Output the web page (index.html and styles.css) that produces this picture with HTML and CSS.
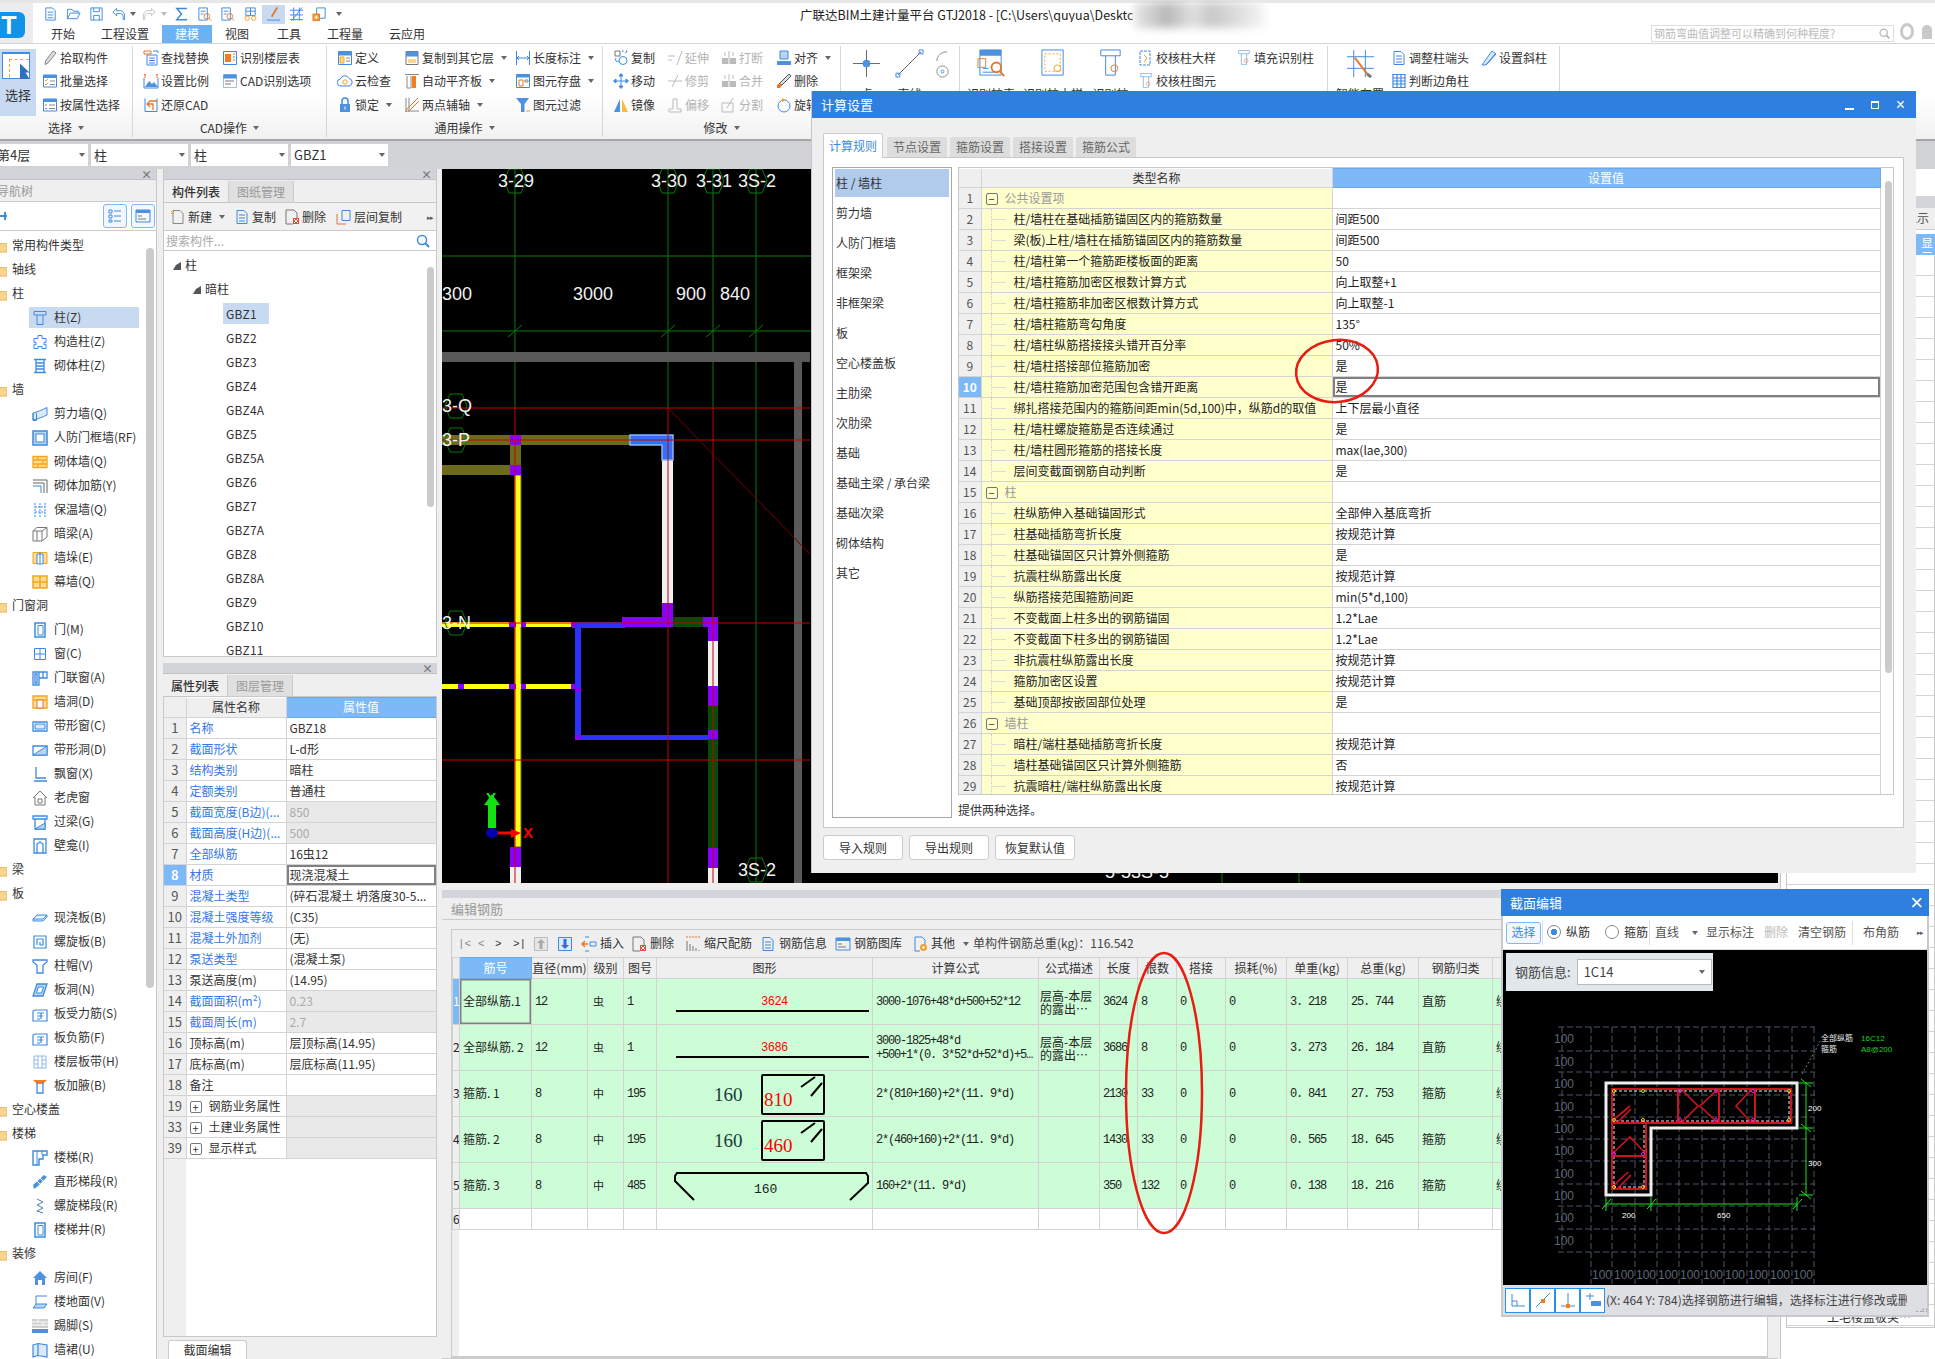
FILE: index.html
```html
<!DOCTYPE html>
<html lang="zh-CN">
<head>
<meta charset="utf-8">
<title>广联达BIM土建计量平台 GTJ2018</title>
<link rel="stylesheet" href="styles.css">
</head>
<body>
<svg class="sprite" aria-hidden="true">
<symbol id="doc" viewBox="0 0 16 16"><path d="M3 1.500h7l3 3v10H3zM5 6h6M5 9h6M5 12h6"/></symbol>
<symbol id="open" viewBox="0 0 16 16"><path d="M1.500 13V3h5l1.500 2h5v2M1.500 13l3-6h10.500l-3 6z"/></symbol>
<symbol id="save" viewBox="0 0 16 16"><path d="M2 1.500h12v13H2zM5 1.500v4h6v-4M5 14.500v-5h6v5"/></symbol>
<symbol id="undo" viewBox="0 0 16 16"><path d="M6 2L2 6l4 4V7.500h4a3 3 0 0 1 3 3V14h1.500v-4A5 5 0 0 0 10 4.500H6z"/></symbol>
<symbol id="redo" viewBox="0 0 16 16"><path stroke="#c4c4c4" d="M10 2l4 4-4 4V7.500H6a3 3 0 0 0-3 3V14H1.500v-4A5 5 0 0 1 6 4.500h4z"/></symbol>
<symbol id="sigma" viewBox="0 0 16 16"><path stroke-width="1.600" d="M13 3V2H3l5 6-5 6h10v-1"/></symbol>
<symbol id="find" viewBox="0 0 16 16"><path d="M2 1.500h9v13H2zM4 5h5M4 8h3"/><circle cx="10.500" cy="10.500" r="3" stroke="#e8762b"/><path stroke="#e8762b" d="M12.500 12.500l2.500 2.500"/></symbol>
<symbol id="glasses" viewBox="0 0 16 16"><path d="M3 1.500h10v8H3zM3 5h10M8 1.500v8"/><circle cx="4.500" cy="12.500" r="2.300" stroke="#f0a030"/><circle cx="11.500" cy="12.500" r="2.300" stroke="#f0a030"/></symbol>
<symbol id="pen" viewBox="0 0 16 16"><path stroke="#e8762b" stroke-width="2" d="M12 1L6 11"/><path d="M1 14.500h14"/></symbol>
<symbol id="gridb" viewBox="0 0 16 16"><path d="M1 4h14M1 9h14M1 14h14M5 1v14M11 1v14"/><path d="M3 15L14 1"/></symbol>
<symbol id="addd" viewBox="0 0 16 16"><path d="M5 1.500h9v11H5z"/><path fill="#f0a030" stroke="#e8762b" d="M1 8h7v7H1z"/><path stroke="#fff" d="M4.500 9.500v4M2.500 11.500h4"/></symbol>
<symbol id="col" viewBox="0 0 16 16"><path d="M2 1.500h12v3.500H2zM5 5v9.500h6V5"/></symbol>
<symbol id="ccol" viewBox="0 0 16 16"><path d="M6 1.500h4v3h4v4h-2v2h2v4h-4v-2H6v2H2v-4h2v-2H2v-4h4z"/></symbol>
<symbol id="mcol" viewBox="0 0 16 16"><path stroke-width="1.300" d="M2 1.500h12M2 14.500h12M4 1.500v13h8v-13M4 5h8M4 8h8M4 11h8"/></symbol>
<symbol id="shear" viewBox="0 0 16 16"><path fill="#dbe9f8" d="M1 7c4-1 9-3 14-5.500V9c-5 2.500-10 4-14 5z"/><path d="M1 7v7.500h3.500V7"/></symbol>
<symbol id="frame" viewBox="0 0 16 16"><path fill="#b9d3ef" stroke-width="1.500" d="M1 1h14v14H1z"/><path fill="#fff" d="M4 4h8v8H4z"/></symbol>
<symbol id="brick" viewBox="0 0 16 16"><path fill="#ffdc8f" stroke="#f2a61d" stroke-width="1.300" d="M1 2.500h14v11H1zM1 6h14M1 10h14M6 2.500V6M11 6v4M6 10v3.500"/></symbol>
<symbol id="rebw" viewBox="0 0 16 16"><path stroke="#666" d="M1 2h14v13M1 5h11v10"/><path d="M1 8h8v7"/></symbol>
<symbol id="insu" viewBox="0 0 16 16"><path stroke-dasharray="2 1" d="M3 1v14M8 1v14M13 1v14M3 5h10M3 10h10"/></symbol>
<symbol id="beam" viewBox="0 0 16 16"><path stroke="#777" d="M1 5h9v10H1zM1 5l4-3.500h10L10 5M10 15l5-4V1.500M5 5v10"/></symbol>
<symbol id="pier" viewBox="0 0 16 16"><path fill="#ffdc8f" stroke="#f2a61d" d="M1 2.500h14v11H1z"/><path fill="#fff" d="M5 4h6v10H5zM8 2v12"/></symbol>
<symbol id="curt" viewBox="0 0 16 16"><path fill="#ffdc8f" stroke="#f2a61d" stroke-width="1.500" d="M1 2h14v12H1zM1 8h14M8 2v12"/></symbol>
<symbol id="door" viewBox="0 0 16 16"><path stroke-width="1.500" d="M3 1h10v14H3z"/><path d="M6 3.500h5V13H6z"/></symbol>
<symbol id="win" viewBox="0 0 16 16"><path d="M2.500 2.500h11v11h-11zM8 2.500v11M2.500 8h11"/></symbol>
<symbol id="dwin" viewBox="0 0 16 16"><path stroke-width="1.300" d="M1 2h6v13H1zM3 4h2v9H3zM7 2h8v6H7zM11 2v6"/></symbol>
<symbol id="wh" viewBox="0 0 16 16"><path fill="#ffdc8f" stroke="#f2a61d" stroke-width="1.300" d="M1 2h14v12H1zM1 6h14"/><path fill="#fff" stroke="#e8762b" d="M5 6h6v8H5z"/></symbol>
<symbol id="stripw" viewBox="0 0 16 16"><path stroke-width="1.300" d="M1 4h14v9H1z"/><path fill="#dbe9f8" d="M3 6h10v5H3z"/></symbol>
<symbol id="striph" viewBox="0 0 16 16"><path stroke-width="1.300" d="M1 4h14v9H1z"/><path fill="#b9d3ef" d="M1 13L15 4v9z"/></symbol>
<symbol id="bay" viewBox="0 0 16 16"><path stroke-width="1.300" d="M4 1v11h10M2 15h13"/></symbol>
<symbol id="dorm" viewBox="0 0 16 16"><path stroke="#777" d="M1 8l7-7 7 7M3 7v8h10V7M6 9h4v4H6z"/></symbol>
<symbol id="lint" viewBox="0 0 16 16"><path stroke-width="1.300" d="M1 2h14v3H1zM3 5h10v10H3z"/><path fill="#b9d3ef" d="M3 15l10-6v6z"/></symbol>
<symbol id="nich" viewBox="0 0 16 16"><path stroke-width="1.300" d="M2 1h12v14H2zM5 15V6l3-2 3 2v9"/></symbol>
<symbol id="slab" viewBox="0 0 16 16"><path fill="#dbe9f8" d="M1 9l4-4h10v2l-4 4H1zM1 9h10l4-4"/></symbol>
<symbol id="spir" viewBox="0 0 16 16"><path stroke-width="1.200" d="M2 2h12v12H2zM5 11V5h6v6H8V8"/></symbol>
<symbol id="cap" viewBox="0 0 16 16"><path stroke-width="1.300" d="M1 2h14v2l-4 3v8H5V7L1 4z"/></symbol>
<symbol id="shol" viewBox="0 0 16 16"><path fill="#b9d3ef" stroke-width="1.300" d="M5 2h10l-4 12H1z"/><path fill="#fff" d="M6.500 5h5L9.500 11h-5z"/></symbol>
<symbol id="sbar" viewBox="0 0 16 16"><path stroke-width="1.200" d="M3 4h12v11H1V5zM5 7h7M9 7v6M5 10h6M5 13h3"/></symbol>
<symbol id="band" viewBox="0 0 16 16"><path stroke="#8ab8e8" d="M2 2h12v12H2zM6 2v12M10 2v12M2 6h4M10 6h4M2 10h4M10 10h4"/></symbol>
<symbol id="haun" viewBox="0 0 16 16"><path fill="#f57d20" stroke="none" d="M1 2h14l-4 4H5z"/><path stroke-width="1.300" d="M5 4v11h6V4"/></symbol>
<symbol id="stair" viewBox="0 0 16 16"><path stroke-width="1.400" d="M1 1h14v4h-4v4H7v6H1z"/><path d="M5 1v14M10 1v4"/></symbol>
<symbol id="flig" viewBox="0 0 16 16"><path fill="#4d91df" stroke="none" d="M1 11L12 1l3 2L5 13l-3 2z"/><path stroke="#fff" d="M5 7l3 3M8 4l3 3"/></symbol>
<symbol id="sps" viewBox="0 0 16 16"><path stroke="#4d7fc0" d="M5 1l6 3-6 3 6 3-6 3 6 2"/></symbol>
<symbol id="room" viewBox="0 0 16 16"><path fill="#4d91df" stroke="none" d="M8 1l7 7h-2v7h-3v-5H6v5H3V8H1z"/></symbol>
<symbol id="flr" viewBox="0 0 16 16"><path fill="#b9d3ef" d="M4 10h11l-3 4H1z"/><path d="M4 10V2h11"/></symbol>
<symbol id="skir" viewBox="0 0 16 16"><path fill="#cfcfcf" stroke="none" d="M0 1h16v9H0z"/><path stroke="#fff" d="M0 4h16M0 7h16M6 1v3M11 4v3"/><path fill="#4d91df" stroke="none" d="M0 11h16v4H0z"/></symbol>
<symbol id="dado" viewBox="0 0 16 16"><path fill="#dbe9f8" stroke-width="1.200" d="M1 3l5-1.500L15 3v12l-9-1.500L1 15zM6 1.500v12"/></symbol>
<symbol id="folder" viewBox="0 0 16 16"><path fill="#f8d690" stroke="#e9b45c" d="M0 4h6l2 2h8v9H0z"/></symbol>
<symbol id="pick" viewBox="0 0 16 16"><path fill="#ddd" stroke="#888" d="M11 1l3 2-8 10-3 1.500.5-3.500z"/></symbol>
<symbol id="batch" viewBox="0 0 16 16"><path fill="#fff" d="M1.500 2h13v12h-13z"/><path fill="#4d91df" stroke="none" d="M1.500 2h13v3h-13z"/><path stroke="#f0a030" d="M3 7l1 1 2-2M3 11l1 1 2-2"/><path stroke="#888" d="M8 8h5M8 11.500h5"/></symbol>
<symbol id="attr" viewBox="0 0 16 16"><path fill="#fff" d="M1.500 2h13v12h-13z"/><path fill="#4d91df" stroke="none" d="M1.500 2h13v3h-13z"/><path stroke="#888" d="M3 8h2M7 8h6M3 11.500h2M7 11.500h6"/></symbol>
<symbol id="repl" viewBox="0 0 16 16"><path d="M4 5h10v10H4zM6 8h6M6 10.500h6M6 13h6"/><path stroke="#e8762b" d="M1 1h7v3H1z"/><path d="M10 1h5v2"/></symbol>
<symbol id="scal" viewBox="0 0 16 16"><path d="M1 5v10h14V5"/><path fill="#4d91df" stroke="none" d="M2 14l4-6 3 3 2-2 4 5z"/><path stroke="#e8762b" d="M2 1v4M1 2l1-1 1 1M14 1v4M13 2l1-1 1 1"/></symbol>
<symbol id="rest" viewBox="0 0 16 16"><path d="M2 1.500v13h12v-13"/><path stroke="#e8762b" stroke-width="1.300" d="M14 4H7L4 7l3 3M4 7h6v6"/></symbol>
<symbol id="ftab" viewBox="0 0 16 16"><path d="M1.500 1.500h13v13h-13z"/><path fill="#f57d20" stroke="none" d="M3 4h6v8H3z"/><path stroke="#888" d="M11 4h2M11 7h2M11 10h2"/></symbol>
<symbol id="copt" viewBox="0 0 16 16"><path stroke="#9ac0ea" d="M1.500 1.500h13v13h-13z"/><path fill="#4d91df" stroke="none" d="M1.500 1.500h13v4h-13z"/><path stroke="#777" d="M3 8h9M3 11h6"/></symbol>
<symbol id="defi" viewBox="0 0 16 16"><path fill="#fff" d="M1.500 1.500h13v13h-13z"/><path fill="#4d91df" stroke="none" d="M1.500 1.500h13v4h-13z"/><path fill="#ffdc8f" stroke="#f2a61d" d="M3 7h4v6H3z"/><path stroke="#888" d="M9 8h4M9 11h4"/></symbol>
<symbol id="clou" viewBox="0 0 16 16"><path d="M4 13a3.500 3.500 0 0 1-.5-7A4.500 4.500 0 0 1 12 5.500 3.800 3.800 0 0 1 12 13z"/><circle cx="8" cy="9" r="2.200" stroke="#f0a030"/></symbol>
<symbol id="lock" viewBox="0 0 16 16"><path d="M5 7V4a3 3 0 0 1 6 0v3" stroke-width="1.500"/><path fill="#4d91df" stroke="none" d="M3 7h10v8H3z"/><path stroke="#fff" d="M8 9.500v3"/></symbol>
<symbol id="cpto" viewBox="0 0 16 16"><path stroke="#777" d="M2 1.500h12v13H2z"/><path fill="#4d91df" stroke="none" d="M2 1.500h12v5H2z"/><path fill="#f8d690" stroke="none" d="M4 9h8v4H4z"/></symbol>
<symbol id="flus" viewBox="0 0 16 16"><path stroke="#888" d="M1 1.500h14M3 3v12h4V3"/><path fill="#f57d20" stroke="none" d="M8 3h4v12H8z"/></symbol>
<symbol id="twop" viewBox="0 0 16 16"><path stroke="#888" d="M2 1v14M1 14h14M5 1v14"/><path stroke="#e8762b" d="M2 13L14 1M6 13L15 4"/></symbol>
<symbol id="dimn" viewBox="0 0 16 16"><path d="M1.500 1v14M14.500 1v14M2 8h12M4 6L2 8l2 2M12 6l2 2-2 2"/></symbol>
<symbol id="stor" viewBox="0 0 16 16"><path d="M1.500 1.500h13v13h-13z"/><path fill="#4d91df" stroke="none" d="M1.500 1.500h13v3h-13z"/><path stroke="#e8762b" d="M4 7h4v6H4z"/><path stroke="#888" d="M10 7h3v2h-3z"/></symbol>
<symbol id="filt" viewBox="0 0 16 16"><path fill="#4d91df" stroke="none" d="M1 1h13L9.500 7v8H6V7z"/><path stroke="#f0a030" d="M11 14h4"/></symbol>
<symbol id="copy" viewBox="0 0 16 16"><circle cx="10" cy="10.500" r="4"/><path stroke="#777" d="M2 1h5v5H2z"/><path d="M12 3a2 2 0 1 0-2-1M3 8a2 2 0 1 0 3 3"/></symbol>
<symbol id="move" viewBox="0 0 16 16"><path d="M8 1v14M1 8h14"/><path fill="#4d91df" d="M8 .5L6 3h4zM8 15.500L6 13h4zM.5 8L3 6v4zM15.500 8L13 6v4z"/></symbol>
<symbol id="mirr" viewBox="0 0 16 16"><path fill="#4d91df" stroke="none" d="M7 2v13H1z"/><path fill="#f8bd40" stroke="none" d="M9 2v13h6z"/></symbol>
<symbol id="extn" viewBox="0 0 16 16"><path stroke="#bbb" d="M1 6h7M1 10h4M15 1l-5 14"/></symbol>
<symbol id="trim" viewBox="0 0 16 16"><path stroke="#bbb" d="M1 8h14M11 2L5 14"/></symbol>
<symbol id="offs" viewBox="0 0 16 16"><path stroke="#bbb" d="M2 15h12v-3H10V2H6v10H2z"/></symbol>
<symbol id="brk" viewBox="0 0 16 16"><path fill="#bbb" stroke="none" d="M1 8h6v6H1zM9 8h6v6H9z"/><path stroke="#bbb" d="M4 2v4M12 2v4M8 1v13"/></symbol>
<symbol id="splt" viewBox="0 0 16 16"><path stroke="#bbb" d="M1 6h11v9H1zM12 1L6 11"/></symbol>
<symbol id="algn" viewBox="0 0 16 16"><path fill="#b9d3ef" d="M4 1h8v8H4z"/><path fill="#4d91df" stroke="none" d="M1 11h14v4H1z"/></symbol>
<symbol id="dele" viewBox="0 0 16 16"><path fill="#ddd" stroke="#555" d="M13 1l2 2-9 9-3-1z"/><path fill="#e8762b" stroke="none" d="M1 12l3-2 2 2-2 3H1z"/></symbol>
<symbol id="rotl" viewBox="0 0 16 16"><circle cx="8" cy="9" r="6"/><path fill="#f0a030" stroke="none" d="M6 1l4 2-4 2z"/></symbol>
<symbol id="pt" viewBox="0 0 30 30"><path stroke="#666" d="M15 1v28M1 15h28"/><circle cx="15" cy="15" r="4" fill="#4d91df" stroke="none"/></symbol>
<symbol id="ln" viewBox="0 0 30 30"><path stroke="#666" d="M3 27L27 3"/><path d="M1 25h4v4H1zM25 1h4v4h-4z"/></symbol>
<symbol id="arc" viewBox="0 0 16 30"><path stroke="#888" d="M2 12C2 6 7 2 13 2"/><circle cx="8" cy="23" r="6" stroke="#888"/><circle cx="8" cy="23" r="1.500" stroke="#4d91df"/></symbol>
<symbol id="idt" viewBox="0 0 30 30"><path fill="#fff" d="M3 1h22v26H3z"/><path fill="#4d91df" stroke="none" d="M3 1h22v6H3z"/><path stroke="#f57d20" d="M1 10h8v9H1z"/><path d="M6 20h6M6 24h12"/><circle cx="20" cy="19" r="5" stroke="#e8762b" stroke-width="2"/><path stroke="#e8762b" stroke-width="2" d="M24 23l4 5"/></symbol>
<symbol id="idc" viewBox="0 0 30 30"><path d="M3 1h22v26H3z"/><path stroke="#f0a030" stroke-dasharray="2 2" d="M6 5h16v18H6z"/><circle cx="19" cy="20" r="3.500" stroke="#f0a030"/></symbol>
<symbol id="idp" viewBox="0 0 30 30"><path d="M5 1h20v6H5zM10 7v20h10V7"/><circle cx="19" cy="20" r="3.500" stroke="#e8762b"/></symbol>
<symbol id="smrt" viewBox="0 0 30 30"><path stroke="#3d8ae0" d="M1 8h28M1 20h28M8 1v28M20 1v28"/><path stroke="#e8762b" stroke-width="2" d="M9 9l14 18"/><path stroke="#777" stroke-width="3" d="M22 26l4 3"/></symbol>
<symbol id="chk" viewBox="0 0 16 16"><path stroke-dasharray="3 1" d="M2 1h10v14H2z"/><path stroke="#f0a030" d="M6 5l3 3-3 4"/></symbol>
<symbol id="slant" viewBox="0 0 16 16"><path fill="#dbe9f8" d="M1 15L11 1l4 3-7 8-4 3z"/><path d="M5 15L14 4"/></symbol>
<symbol id="ptbl" viewBox="0 0 16 16"><path stroke-width="1.200" d="M2 1.500h12v13H2zM2 5h12M2 8h12M2 11h12M6 1.500v13M10 1.500v13"/></symbol>
<symbol id="list" viewBox="0 0 16 16"><path d="M2 2h3v3H2zM2 7h3v3H2zM2 12h3v2H2zM7 3h7M7 8h7M7 13h7"/></symbol>
<symbol id="ins" viewBox="0 0 16 16"><path stroke="#e8762b" stroke-width="1.500" d="M7 8H2M4 5L1 8l3 3"/><path d="M9 6h6v4H9zM4 1h4M4 15h4"/></symbol>
<symbol id="del" viewBox="0 0 16 16"><path stroke="#777" d="M2 1h8l3 3v7M2 1v14h7"/><path fill="#e64c3c" stroke="none" d="M9 9h6v6H9z"/><path stroke="#fff" d="M10 10l4 4M14 10l-4 4"/></symbol>
<symbol id="cut" viewBox="0 0 16 16"><path stroke="#777" d="M2 15V5M5 15V8M8 15V10M11 15v-3M14 15v-1"/><path stroke="#e8762b" stroke-dasharray="2 1" d="M1 1h14"/></symbol>
<symbol id="lib" viewBox="0 0 16 16"><path d="M1 2h14v12H1z"/><path fill="#4d91df" stroke="none" d="M1 2h14v3H1z"/><path stroke="#777" d="M3 8h4M3 11h8"/></symbol>
<symbol id="oth" viewBox="0 0 16 16"><path d="M3 1h7l3 3v7M3 1v14h5"/><circle cx="11.500" cy="11.500" r="3.500" fill="#f0a030" stroke="none"/><circle cx="11.500" cy="11.500" r="1.300" fill="#fff" stroke="none"/></symbol>
<symbol id="upd" viewBox="0 0 16 16"><path stroke="#bbb" fill="#e6e6e6" d="M1.500 1.500h13v13h-13z"/><path fill="#aaa" stroke="none" d="M8 3l4 4H9.500v6h-3V7H4z"/></symbol>
<symbol id="dnd" viewBox="0 0 16 16"><path fill="#dbe9f8" d="M1.500 1.500h13v13h-13z"/><path fill="#2f6fd0" stroke="none" d="M8 13l4-4H9.500V3h-3v6H4z"/></symbol>
<symbol id="newd" viewBox="0 0 16 16"><path stroke="#888" d="M3 1.500h7l3 3v10H3z"/><path stroke="#f0a030" d="M1 2l3 3M4 2L1 5"/></symbol>
<symbol id="flrc" viewBox="0 0 16 16"><path d="M6 1.500h8v10H6z"/><path stroke="#e8762b" d="M1 5v10h9"/></symbol>
<symbol id="srch" viewBox="0 0 16 16"><circle cx="7" cy="7" r="4.500" stroke-width="1.500"/><path stroke-width="2" d="M10 10l4 4"/></symbol>
</svg>

<div class="app">
  <header class="top">
    <div class="logo"><svg class="logo-svg" viewBox="0 0 33 40"><rect x="-6" y="9" width="31" height="26" rx="6" fill="#1293e8"/><text x="9" y="31" class="logo-t">T</text></svg></div>
    <div class="top-main">
      <div class="qat">
        <span class="q"><svg class="ic"><use href="#doc"/></svg></span>
        <span class="q"><svg class="ic"><use href="#open"/></svg></span>
        <span class="q"><svg class="ic"><use href="#save"/></svg></span>
        <span class="q q-w"><svg class="ic"><use href="#undo"/></svg><i class="dd"></i></span>
        <span class="q q-w"><svg class="ic"><use href="#redo"/></svg><i class="dd dd-l"></i></span>
        <span class="q"><svg class="ic"><use href="#sigma"/></svg></span>
        <span class="q"><svg class="ic"><use href="#find"/></svg></span>
        <span class="q"><svg class="ic"><use href="#find"/></svg></span>
        <span class="q"><svg class="ic"><use href="#glasses"/></svg></span>
        <span class="q q-on"><svg class="ic"><use href="#pen"/></svg></span>
        <span class="q"><svg class="ic"><use href="#gridb"/></svg></span>
        <span class="q"><svg class="ic"><use href="#addd"/></svg></span>
        <span class="q-more"><i class="dd"></i></span>
        <div class="title">广联达BIM土建计量平台 GTJ2018 - [C:\Users\quyua\Desktc</div>
        <div class="blur"></div>
      </div>
      <nav class="tabs">
        <span class="tab t1">开始</span><span class="tab t2">工程设置</span><span class="tab tab-on">建模</span><span class="tab t4">视图</span><span class="tab t5">工具</span><span class="tab t6">工程量</span><span class="tab t7">云应用</span>
        <div class="search"><span class="search-t">钢筋弯曲值调整可以精确到何种程度?</span><svg class="ic ic-g"><use href="#srch"/></svg></div>
        <span class="usr"></span><span class="bell"></span>
      </nav>
    </div>
  </header>

  <section class="ribbon">
    <div class="rg g-sel">
      <div class="rb">
        <div class="bigsel"><div class="bigsel-i"><i class="bigsel-d"></i><i class="bigsel-a"></i></div><span>选择</span></div>
        <div class="rgrid">
          <span class="ri"><svg class="ic"><use href="#pick"/></svg>拾取构件</span>
          <span class="ri"><svg class="ic"><use href="#batch"/></svg>批量选择</span>
          <span class="ri"><svg class="ic"><use href="#attr"/></svg>按属性选择</span>
        </div>
      </div>
      <div class="rl">选择<i class="dd"></i></div>
    </div>
    <div class="rg g-cad">
      <div class="rb"><div class="rgrid">
        <span class="ri"><svg class="ic"><use href="#repl"/></svg>查找替换</span>
        <span class="ri"><svg class="ic"><use href="#scal"/></svg>设置比例</span>
        <span class="ri"><svg class="ic"><use href="#rest"/></svg>还原CAD</span>
        <span class="ri"><svg class="ic"><use href="#ftab"/></svg>识别楼层表</span>
        <span class="ri"><svg class="ic"><use href="#copt"/></svg>CAD识别选项</span>
      </div></div>
      <div class="rl">CAD操作<i class="dd"></i></div>
    </div>
    <div class="rg g-gen">
      <div class="rb"><div class="rgrid">
        <span class="ri"><svg class="ic"><use href="#defi"/></svg>定义</span>
        <span class="ri"><svg class="ic"><use href="#clou"/></svg>云检查</span>
        <span class="ri"><svg class="ic"><use href="#lock"/></svg>锁定<i class="dd"></i></span>
        <span class="ri"><svg class="ic"><use href="#cpto"/></svg>复制到其它层<i class="dd"></i></span>
        <span class="ri"><svg class="ic"><use href="#flus"/></svg>自动平齐板<i class="dd"></i></span>
        <span class="ri"><svg class="ic"><use href="#twop"/></svg>两点辅轴<i class="dd"></i></span>
        <span class="ri"><svg class="ic"><use href="#dimn"/></svg>长度标注<i class="dd"></i></span>
        <span class="ri"><svg class="ic"><use href="#stor"/></svg>图元存盘<i class="dd"></i></span>
        <span class="ri"><svg class="ic"><use href="#filt"/></svg>图元过滤</span>
      </div></div>
      <div class="rl">通用操作<i class="dd"></i></div>
    </div>
    <div class="rg g-mod">
      <div class="rb"><div class="rgrid">
        <span class="ri"><svg class="ic"><use href="#copy"/></svg>复制</span>
        <span class="ri"><svg class="ic"><use href="#move"/></svg>移动</span>
        <span class="ri"><svg class="ic"><use href="#mirr"/></svg>镜像</span>
        <span class="ri ri-off"><svg class="ic"><use href="#extn"/></svg>延伸</span>
        <span class="ri ri-off"><svg class="ic"><use href="#trim"/></svg>修剪</span>
        <span class="ri ri-off"><svg class="ic"><use href="#offs"/></svg>偏移</span>
        <span class="ri ri-off"><svg class="ic"><use href="#brk"/></svg>打断</span>
        <span class="ri ri-off"><svg class="ic"><use href="#brk"/></svg>合并</span>
        <span class="ri ri-off"><svg class="ic"><use href="#splt"/></svg>分割</span>
        <span class="ri"><svg class="ic"><use href="#algn"/></svg>对齐<i class="dd"></i></span>
        <span class="ri"><svg class="ic"><use href="#dele"/></svg>删除</span>
        <span class="ri"><svg class="ic"><use href="#rotl"/></svg>旋转</span>
      </div></div>
      <div class="rl">修改<i class="dd"></i></div>
    </div>
    <div class="rg g-draw">
      <div class="rb">
        <div class="bb bb-pt"><svg class="ic30"><use href="#pt"/></svg><span>点</span></div>
        <div class="bb bb-ln"><svg class="ic30"><use href="#ln"/></svg><span>直线</span></div>
        <svg class="ic-arc"><use href="#arc"/></svg>
      </div>
    </div>
    <div class="rg g-rec">
      <div class="rb">
        <div class="bb bb-a"><svg class="ic30"><use href="#idt"/></svg><span>识别柱表</span></div>
        <div class="bb bb-b"><svg class="ic30"><use href="#idc"/></svg><span>识别柱大样</span></div>
        <div class="bb bb-c"><svg class="ic30"><use href="#idp"/></svg><span>识别柱</span></div>
        <div class="rgrid">
          <span class="ri"><svg class="ic"><use href="#chk"/></svg>校核柱大样</span>
          <span class="ri"><svg class="ic"><use href="#idp"/></svg>校核柱图元</span>
          <span class="ri"><svg class="ic"><use href="#idp"/></svg>填充识别柱</span>
        </div>
      </div>
    </div>
    <div class="rg g-smart">
      <div class="rb">
        <div class="bb bb-s"><svg class="ic30"><use href="#smrt"/></svg><span>智能布置</span></div>
        <div class="rgrid">
          <span class="ri"><svg class="ic"><use href="#doc"/></svg>调整柱端头</span>
          <span class="ri"><svg class="ic"><use href="#ptbl"/></svg>判断边角柱</span>
          <span class="ri"><svg class="ic"><use href="#slant"/></svg>设置斜柱</span>
        </div>
      </div>
    </div>
  </section>

  <section class="combos">
    <div class="cb cb-a"><span class="cb-cut">第4层</span><i class="dd"></i></div>
    <div class="cb cb-b"><span>柱</span><i class="dd"></i></div>
    <div class="cb cb-b"><span>柱</span><i class="dd"></i></div>
    <div class="cb cb-b"><span>GBZ1</span><i class="dd"></i></div>
  </section>

  <main class="work">
    <aside class="nav">
      <div class="pbar"><span class="px">×</span></div>
      <div class="nav-head"><span class="nav-cut">导航树</span></div>
      <div class="nav-tool"><svg class="pin" viewBox="0 0 10 10"><path d="M0 5h7M5 1v8"/></svg><span class="vbtn"><svg class="ic"><use href="#list"/></svg></span><span class="vbtn"><svg class="ic"><use href="#lib"/></svg></span></div>
      <div class="nav-body">
        <div class="tree">
          <div class="nr g"><svg class="fold"><use href="#folder"/></svg>常用构件类型</div>
          <div class="nr g"><svg class="fold"><use href="#folder"/></svg>轴线</div>
          <div class="nr g"><svg class="fold"><use href="#folder"/></svg>柱</div>
          <div class="nr i on"><svg class="ic"><use href="#col"/></svg>柱(Z)</div>
          <div class="nr i"><svg class="ic"><use href="#ccol"/></svg>构造柱(Z)</div>
          <div class="nr i"><svg class="ic"><use href="#mcol"/></svg>砌体柱(Z)</div>
          <div class="nr g"><svg class="fold"><use href="#folder"/></svg>墙</div>
          <div class="nr i"><svg class="ic"><use href="#shear"/></svg>剪力墙(Q)</div>
          <div class="nr i"><svg class="ic"><use href="#frame"/></svg>人防门框墙(RF)</div>
          <div class="nr i"><svg class="ic"><use href="#brick"/></svg>砌体墙(Q)</div>
          <div class="nr i"><svg class="ic"><use href="#rebw"/></svg>砌体加筋(Y)</div>
          <div class="nr i"><svg class="ic"><use href="#insu"/></svg>保温墙(Q)</div>
          <div class="nr i"><svg class="ic"><use href="#beam"/></svg>暗梁(A)</div>
          <div class="nr i"><svg class="ic"><use href="#pier"/></svg>墙垛(E)</div>
          <div class="nr i"><svg class="ic"><use href="#curt"/></svg>幕墙(Q)</div>
          <div class="nr g"><svg class="fold"><use href="#folder"/></svg>门窗洞</div>
          <div class="nr i"><svg class="ic"><use href="#door"/></svg>门(M)</div>
          <div class="nr i"><svg class="ic"><use href="#win"/></svg>窗(C)</div>
          <div class="nr i"><svg class="ic"><use href="#dwin"/></svg>门联窗(A)</div>
          <div class="nr i"><svg class="ic"><use href="#wh"/></svg>墙洞(D)</div>
          <div class="nr i"><svg class="ic"><use href="#stripw"/></svg>带形窗(C)</div>
          <div class="nr i"><svg class="ic"><use href="#striph"/></svg>带形洞(D)</div>
          <div class="nr i"><svg class="ic"><use href="#bay"/></svg>飘窗(X)</div>
          <div class="nr i"><svg class="ic"><use href="#dorm"/></svg>老虎窗</div>
          <div class="nr i"><svg class="ic"><use href="#lint"/></svg>过梁(G)</div>
          <div class="nr i"><svg class="ic"><use href="#nich"/></svg>壁龛(I)</div>
          <div class="nr g"><svg class="fold"><use href="#folder"/></svg>梁</div>
          <div class="nr g"><svg class="fold"><use href="#folder"/></svg>板</div>
          <div class="nr i"><svg class="ic"><use href="#slab"/></svg>现浇板(B)</div>
          <div class="nr i"><svg class="ic"><use href="#spir"/></svg>螺旋板(B)</div>
          <div class="nr i"><svg class="ic"><use href="#cap"/></svg>柱帽(V)</div>
          <div class="nr i"><svg class="ic"><use href="#shol"/></svg>板洞(N)</div>
          <div class="nr i"><svg class="ic"><use href="#sbar"/></svg>板受力筋(S)</div>
          <div class="nr i"><svg class="ic"><use href="#sbar"/></svg>板负筋(F)</div>
          <div class="nr i"><svg class="ic"><use href="#band"/></svg>楼层板带(H)</div>
          <div class="nr i"><svg class="ic"><use href="#haun"/></svg>板加腋(B)</div>
          <div class="nr g"><svg class="fold"><use href="#folder"/></svg>空心楼盖</div>
          <div class="nr g"><svg class="fold"><use href="#folder"/></svg>楼梯</div>
          <div class="nr i"><svg class="ic"><use href="#stair"/></svg>楼梯(R)</div>
          <div class="nr i"><svg class="ic"><use href="#flig"/></svg>直形梯段(R)</div>
          <div class="nr i"><svg class="ic"><use href="#sps"/></svg>螺旋梯段(R)</div>
          <div class="nr i"><svg class="ic"><use href="#door"/></svg>楼梯井(R)</div>
          <div class="nr g"><svg class="fold"><use href="#folder"/></svg>装修</div>
          <div class="nr i"><svg class="ic"><use href="#room"/></svg>房间(F)</div>
          <div class="nr i"><svg class="ic"><use href="#flr"/></svg>楼地面(V)</div>
          <div class="nr i"><svg class="ic"><use href="#skir"/></svg>踢脚(S)</div>
          <div class="nr i"><svg class="ic"><use href="#dado"/></svg>墙裙(U)</div>
        </div>
        <div class="vs vs-nav"><i></i></div>
      </div>
    </aside>

    <div class="mid">
      <section class="clist">
        <div class="pbar"><span class="px">×</span></div>
        <div class="ptabs"><span class="ptab ptab-on">构件列表</span><span class="ptab">图纸管理</span></div>
        <div class="ctool">
          <span class="ct ct-a"><svg class="ic"><use href="#newd"/></svg>新建<i class="dd"></i></span>
          <span class="ct ct-b"><svg class="ic"><use href="#doc"/></svg>复制</span>
          <span class="ct ct-c"><svg class="ic"><use href="#del"/></svg>删除</span>
          <span class="ct"><svg class="ic"><use href="#flrc"/></svg>层间复制</span>
          <span class="more">▸▸</span>
        </div>
        <div class="csearch"><span>搜索构件...</span><svg class="ic"><use href="#srch"/></svg></div>
        <div class="cbody">
          <div class="ctree">
            <div class="cr cr0"><i class="tw"></i>柱</div>
            <div class="cr cr1"><i class="tw"></i>暗柱</div>
            <div class="cr cr2 on"><span>GBZ1</span></div>
            <div class="cr cr2"><span>GBZ2</span></div>
            <div class="cr cr2"><span>GBZ3</span></div>
            <div class="cr cr2"><span>GBZ4</span></div>
            <div class="cr cr2"><span>GBZ4A</span></div>
            <div class="cr cr2"><span>GBZ5</span></div>
            <div class="cr cr2"><span>GBZ5A</span></div>
            <div class="cr cr2"><span>GBZ6</span></div>
            <div class="cr cr2"><span>GBZ7</span></div>
            <div class="cr cr2"><span>GBZ7A</span></div>
            <div class="cr cr2"><span>GBZ8</span></div>
            <div class="cr cr2"><span>GBZ8A</span></div>
            <div class="cr cr2"><span>GBZ9</span></div>
            <div class="cr cr2"><span>GBZ10</span></div>
            <div class="cr cr2"><span>GBZ11</span></div>
          </div>
          <div class="vs vs-c"><i></i></div>
        </div>
      </section>
      <section class="props">
        <div class="pbar"><span class="px">×</span></div>
        <div class="ptabs"><span class="ptab ptab-on">属性列表</span><span class="ptab">图层管理</span></div>
        <div class="pbody">
          <table class="ptable">
            <colgroup><col class="pc1"><col class="pc2"><col class="pc3"></colgroup>
            <tr class="ph"><th></th><th>属性名称</th><th class="hl">属性值</th></tr>
            <tr><td class="n">1</td><td class="lk">名称</td><td>GBZ18</td></tr>
            <tr><td class="n">2</td><td class="lk">截面形状</td><td>L-d形</td></tr>
            <tr><td class="n">3</td><td class="lk">结构类别</td><td>暗柱</td></tr>
            <tr><td class="n">4</td><td class="lk">定额类别</td><td>普通柱</td></tr>
            <tr><td class="n">5</td><td class="lk">截面宽度(B边)(...</td><td class="dis">850</td></tr>
            <tr><td class="n">6</td><td class="lk">截面高度(H边)(...</td><td class="dis">500</td></tr>
            <tr><td class="n">7</td><td class="lk">全部纵筋</td><td>16虫12</td></tr>
            <tr><td class="n nsel">8</td><td class="lk">材质</td><td class="csel">现浇混凝土</td></tr>
            <tr><td class="n">9</td><td class="lk">混凝土类型</td><td>(碎石混凝土 坍落度30-5...</td></tr>
            <tr><td class="n">10</td><td class="lk">混凝土强度等级</td><td>(C35)</td></tr>
            <tr><td class="n">11</td><td class="lk">混凝土外加剂</td><td>(无)</td></tr>
            <tr><td class="n">12</td><td class="lk">泵送类型</td><td>(混凝土泵)</td></tr>
            <tr><td class="n">13</td><td>泵送高度(m)</td><td>(14.95)</td></tr>
            <tr><td class="n">14</td><td class="lk">截面面积(m²)</td><td class="dis">0.23</td></tr>
            <tr><td class="n">15</td><td class="lk">截面周长(m)</td><td class="dis">2.7</td></tr>
            <tr><td class="n">16</td><td>顶标高(m)</td><td>层顶标高(14.95)</td></tr>
            <tr><td class="n">17</td><td>底标高(m)</td><td>层底标高(11.95)</td></tr>
            <tr><td class="n">18</td><td>备注</td><td></td></tr>
            <tr><td class="n">19</td><td><i class="pm">+</i>钢筋业务属性</td><td class="dis"></td></tr>
            <tr><td class="n">33</td><td><i class="pm">+</i>土建业务属性</td><td class="dis"></td></tr>
            <tr><td class="n">39</td><td><i class="pm">+</i>显示样式</td><td class="dis"></td></tr>
          </table>
        </div>
        <div class="stabs"><span class="stab">截面编辑</span></div>
      </section>
    </div>

    <div class="center">
      <svg class="canvas" viewBox="442 169 1336 714">
        <defs><polygon id="hex" points="-11,0 -6,-12 6,-12 11,0 6,12 -6,12" fill="none" stroke="#0a7a0a"/></defs>
        <rect x="442" y="169" width="1336" height="714" fill="#000"/>
        <path class="cg" d="M442 256H1778M442 331H1778M515 169V408M668 169V408M713 169V408M756 169V882M1222 860V883M1299 860V883"/>
        <path class="cg" d="M508 337L522 325M661 337L675 325M706 337L720 325M749 337L763 325"/>
        <path fill="#595959" d="M442 352H810V362H802V883H794V362H442z"/>
        <rect x="442" y="435" width="188" height="10" fill="#6b6b1b"/>
        <rect x="510" y="435" width="11" height="40" fill="#6b6b1b"/>
        <rect x="442" y="465" width="68" height="10" fill="#6b6b1b"/>
        <path fill="#ffff14" stroke="#6b6b1b" d="M514.500 475h6.500v372h-6.500z"/>
        <rect x="510" y="867" width="11" height="16" fill="#f0f0f0"/>
        <path fill="#ffff14" d="M442 622H572V627H442zM442 684H572V689H442z"/>
        <path fill="#2f2fff" d="M572 622H625V628H572zM575 625H581V740H575zM575 735H708V740H575z"/>
        <path fill="#064d06" d="M673 617H705V627H673zM708 706H718V848H708z"/>
        <path fill="#f0f0f0" d="M662 460H673V603H662zM708 641H718V686H708zM708 868H718V883H708z"/>
        <path fill="#8a00ff" d="M510 435H521V445H510zM510 465H521V475H510zM510 847H521V867H510zM662 603H673V627H662zM622 617H673V627H622zM703 617H718V627H703zM708 627H718V641H708zM708 686H718V706H708zM708 730H718V739H708zM708 848H718V868H708zM509 622H516V627H509zM521 622H526V627H521zM571 622H576V627H571zM458 684H464V689H458zM509 684H516V689H509zM521 684H526V689H521zM571 684H576V689H571zM575 688H581V692H575zM575 735H581V740H575z"/>
        <path fill="#2f72ff" stroke="#8fb4ea" stroke-width="1.500" d="M630 435H673V460H662V445H630z"/>
        <path class="cr1l" d="M442 408H810M442 440H810M442 623H810M442 760H810M515 408V883M668 408V883M713 408V883"/>
        <path class="cr1l cr1d" d="M668 408L810 554"/>
        <path fill="#14e014" d="M488 805H484L492 794L500 805H496V828H488z"/>
        <path stroke="#f00" stroke-width="3" d="M494 833H512"/>
        <path fill="#f00" d="M511 829L521 833L511 838z"/>
        <ellipse cx="492" cy="833" rx="6" ry="5" fill="#0000b4"/>
        <text class="axis ax-g" x="486" y="803">Y</text>
        <text class="axis ax-r" x="523" y="838">X</text>
        <use href="#hex" x="515" y="181"/><use href="#hex" x="668" y="181"/><use href="#hex" x="713" y="181"/><use href="#hex" x="756" y="181"/>
        <use href="#hex" x="456" y="406"/><use href="#hex" x="456" y="440"/><use href="#hex" x="456" y="623"/><use href="#hex" x="756" y="870"/>
        <text class="ct1" x="498" y="187">3-29</text>
        <text class="ct1" x="651" y="187">3-30</text>
        <text class="ct1" x="696" y="187">3-31</text>
        <text class="ct1" x="738" y="187">3S-2</text>
        <text class="ct1" x="442" y="300">300</text>
        <text class="ct1" x="573" y="300">3000</text>
        <text class="ct1" x="676" y="300">900</text>
        <text class="ct1" x="720" y="300">840</text>
        <text class="ct1" x="442" y="412">3-Q</text>
        <text class="ct1" x="442" y="446">3-P</text>
        <text class="ct1" x="442" y="629">3-N</text>
        <text class="ct1" x="738" y="876">3S-2</text>
        <text class="ct1" x="1105" y="878">5-53S-5</text>
      </svg>
      <div class="gapbar"></div>
      <section class="rebar">
        <div class="rebar-t">编辑钢筋</div>
        <div class="rebar-box">
          <div class="rtool">
            <span class="nv nv1">|&lt;</span><span class="nv nv2">&lt;</span><span class="nv nv3">&gt;</span><span class="nv nv4">&gt;|</span>
            <svg class="ic rt-up"><use href="#upd"/></svg>
            <svg class="ic rt-dn"><use href="#dnd"/></svg>
            <span class="rt rt1"><svg class="ic"><use href="#ins"/></svg>插入</span>
            <span class="rt rt2"><svg class="ic"><use href="#del"/></svg>删除</span>
            <span class="rt rt3"><svg class="ic"><use href="#cut"/></svg>缩尺配筋</span>
            <span class="rt rt4"><svg class="ic"><use href="#doc"/></svg>钢筋信息</span>
            <span class="rt rt5"><svg class="ic"><use href="#lib"/></svg>钢筋图库</span>
            <span class="rt rt6"><svg class="ic"><use href="#oth"/></svg>其他<i class="dd"></i></span>
            <span class="rt-tot">单构件钢筋总重(kg)：116.542</span>
          </div>
          <table class="rtable">
            <colgroup><col class="c0"><col class="c1"><col class="c2"><col class="c3"><col class="c4"><col class="c5"><col class="c6"><col class="c7"><col class="c8"><col class="c9"><col class="c10"><col class="c11"><col class="c12"><col class="c13"><col class="c14"><col class="c15"></colgroup>
            <tr class="rh"><th></th><th class="hl">筋号</th><th>直径(mm)</th><th>级别</th><th>图号</th><th>图形</th><th>计算公式</th><th>公式描述</th><th>长度</th><th>根数</th><th>搭接</th><th>损耗(%)</th><th>单重(kg)</th><th>总重(kg)</th><th>钢筋归类</th><th>搭接形式</th></tr>
            <tr class="rr">
              <td class="rn rn-sel">1</td><td class="rname rsel">全部纵筋.1</td><td class="m">12</td><td class="gr">虫</td><td class="m">1</td>
              <td class="shape"><svg class="sh" viewBox="0 0 216 45"><text class="s-r" x="104" y="26">3624</text><path class="s-l" d="M19 32H212"/></svg></td>
              <td class="m f">3000-1076+48*d+500+52*12</td><td class="ds">层高-本层<br>的露出…</td><td class="m">3624</td><td class="m">8</td><td class="m">0</td><td class="m">0</td><td class="m">3. 218</td><td class="m">25. 744</td><td>直筋</td><td>绑扎</td>
            </tr>
            <tr class="rr">
              <td class="rn">2</td><td class="rname">全部纵筋. 2</td><td class="m">12</td><td class="gr">虫</td><td class="m">1</td>
              <td class="shape"><svg class="sh" viewBox="0 0 216 45"><text class="s-r" x="104" y="26">3686</text><path class="s-l" d="M19 32H212"/></svg></td>
              <td class="m f">3000-1825+48*d<br>+500+1*(0. 3*52*d+52*d)+5…</td><td class="ds">层高-本层<br>的露出…</td><td class="m">3686</td><td class="m">8</td><td class="m">0</td><td class="m">0</td><td class="m">3. 273</td><td class="m">26. 184</td><td>直筋</td><td>绑扎</td>
            </tr>
            <tr class="rr">
              <td class="rn">3</td><td class="rname">箍筋. 1</td><td class="m">8</td><td class="gr">中</td><td class="m">195</td>
              <td class="shape"><svg class="sh" viewBox="0 0 216 45"><text class="s-b" x="57" y="30">160</text><rect class="s-l" x="105" y="4" width="62" height="39" rx="1"/><text class="s-br" x="107" y="35">810</text><path class="s-l" d="M144 16L158 6M154 25L165 12"/></svg></td>
              <td class="m f">2*(810+160)+2*(11. 9*d)</td><td></td><td class="m">2130</td><td class="m">33</td><td class="m">0</td><td class="m">0</td><td class="m">0. 841</td><td class="m">27. 753</td><td>箍筋</td><td>绑扎</td>
            </tr>
            <tr class="rr">
              <td class="rn">4</td><td class="rname">箍筋. 2</td><td class="m">8</td><td class="gr">中</td><td class="m">195</td>
              <td class="shape"><svg class="sh" viewBox="0 0 216 45"><text class="s-b" x="57" y="30">160</text><rect class="s-l" x="105" y="4" width="62" height="39" rx="1"/><text class="s-br" x="107" y="35">460</text><path class="s-l" d="M144 16L158 6M154 25L165 12"/></svg></td>
              <td class="m f">2*(460+160)+2*(11. 9*d)</td><td></td><td class="m">1430</td><td class="m">33</td><td class="m">0</td><td class="m">0</td><td class="m">0. 565</td><td class="m">18. 645</td><td>箍筋</td><td>绑扎</td>
            </tr>
            <tr class="rr">
              <td class="rn">5</td><td class="rname">箍筋. 3</td><td class="m">8</td><td class="gr">中</td><td class="m">485</td>
              <td class="shape"><svg class="sh" viewBox="0 0 216 45"><path class="s-l" d="M37 37L18 18V13L20 10H209L211 13V20L193 37"/><text class="s-m" x="97" y="30">160</text></svg></td>
              <td class="m f">160+2*(11. 9*d)</td><td></td><td class="m">350</td><td class="m">132</td><td class="m">0</td><td class="m">0</td><td class="m">0. 138</td><td class="m">18. 216</td><td>箍筋</td><td>绑扎</td>
            </tr>
            <tr class="rempty"><td class="rn">6</td><td></td><td></td><td></td><td></td><td></td><td></td><td></td><td></td><td></td><td></td><td></td><td></td><td></td><td></td><td></td></tr>
          </table>
        </div>
      </section>
    </div>

    <aside class="rp">
      <div class="rp-t"></div>
      <div class="rp-tab"><span>显示</span></div>
      <div class="rp-h"><span>显示</span></div>
      <div class="rp-rows"><span class="rp-txt">工毛楼盖板突…</span></div>
    </aside>
  </main>
</div>

<section class="win win-calc">
  <header class="win-t"><span>计算设置</span><span class="wb"><i class="wb-min"></i><i class="wb-max"></i><i class="wb-x">×</i></span></header>
  <div class="win-b">
    <div class="dtabs"><span class="dtab dtab-on">计算规则</span><span class="dtab">节点设置</span><span class="dtab">箍筋设置</span><span class="dtab">搭接设置</span><span class="dtab">箍筋公式</span></div>
    <div class="dpanel">
      <ul class="dlist">
        <li class="on">柱 / 墙柱</li><li>剪力墙</li><li>人防门框墙</li><li>框架梁</li><li>非框架梁</li><li>板</li><li>空心楼盖板</li><li>主肋梁</li><li>次肋梁</li><li>基础</li><li>基础主梁 / 承台梁</li><li>基础次梁</li><li>砌体结构</li><li>其它</li>
      </ul>
      <div class="dright">
        <div class="dwrap">
          <table class="stable">
            <colgroup><col class="sc1"><col class="sc2"><col class="sc3"></colgroup>
            <tr class="sh-r"><th></th><th>类型名称</th><th class="hl">设置值</th></tr>
            <tr><td class="n">1</td><td class="y g0"><i class="pm">−</i>公共设置项</td><td></td></tr>
            <tr><td class="n">2</td><td class="y l">柱/墙柱在基础插筋锚固区内的箍筋数量</td><td>间距500</td></tr>
            <tr><td class="n">3</td><td class="y l">梁(板)上柱/墙柱在插筋锚固区内的箍筋数量</td><td>间距500</td></tr>
            <tr><td class="n">4</td><td class="y l">柱/墙柱第一个箍筋距楼板面的距离</td><td>50</td></tr>
            <tr><td class="n">5</td><td class="y l">柱/墙柱箍筋加密区根数计算方式</td><td>向上取整+1</td></tr>
            <tr><td class="n">6</td><td class="y l">柱/墙柱箍筋非加密区根数计算方式</td><td>向上取整-1</td></tr>
            <tr><td class="n">7</td><td class="y l">柱/墙柱箍筋弯勾角度</td><td>135°</td></tr>
            <tr><td class="n">8</td><td class="y l">柱/墙柱纵筋搭接接头错开百分率</td><td>50%</td></tr>
            <tr><td class="n">9</td><td class="y l">柱/墙柱搭接部位箍筋加密</td><td>是</td></tr>
            <tr><td class="n nsel">10</td><td class="y l">柱/墙柱箍筋加密范围包含错开距离</td><td class="csel">是</td></tr>
            <tr><td class="n">11</td><td class="y l">绑扎搭接范围内的箍筋间距min(5d,100)中，纵筋d的取值</td><td>上下层最小直径</td></tr>
            <tr><td class="n">12</td><td class="y l">柱/墙柱螺旋箍筋是否连续通过</td><td>是</td></tr>
            <tr><td class="n">13</td><td class="y l">柱/墙柱圆形箍筋的搭接长度</td><td>max(lae,300)</td></tr>
            <tr><td class="n">14</td><td class="y l">层间变截面钢筋自动判断</td><td>是</td></tr>
            <tr><td class="n">15</td><td class="y g0"><i class="pm">−</i>柱</td><td></td></tr>
            <tr><td class="n">16</td><td class="y l">柱纵筋伸入基础锚固形式</td><td>全部伸入基底弯折</td></tr>
            <tr><td class="n">17</td><td class="y l">柱基础插筋弯折长度</td><td>按规范计算</td></tr>
            <tr><td class="n">18</td><td class="y l">柱基础锚固区只计算外侧箍筋</td><td>是</td></tr>
            <tr><td class="n">19</td><td class="y l">抗震柱纵筋露出长度</td><td>按规范计算</td></tr>
            <tr><td class="n">20</td><td class="y l">纵筋搭接范围箍筋间距</td><td>min(5*d,100)</td></tr>
            <tr><td class="n">21</td><td class="y l">不变截面上柱多出的钢筋锚固</td><td>1.2*Lae</td></tr>
            <tr><td class="n">22</td><td class="y l">不变截面下柱多出的钢筋锚固</td><td>1.2*Lae</td></tr>
            <tr><td class="n">23</td><td class="y l">非抗震柱纵筋露出长度</td><td>按规范计算</td></tr>
            <tr><td class="n">24</td><td class="y l">箍筋加密区设置</td><td>按规范计算</td></tr>
            <tr><td class="n">25</td><td class="y l">基础顶部按嵌固部位处理</td><td>是</td></tr>
            <tr><td class="n">26</td><td class="y g0"><i class="pm">−</i>墙柱</td><td></td></tr>
            <tr><td class="n">27</td><td class="y l">暗柱/端柱基础插筋弯折长度</td><td>按规范计算</td></tr>
            <tr><td class="n">28</td><td class="y l">墙柱基础锚固区只计算外侧箍筋</td><td>否</td></tr>
            <tr><td class="n">29</td><td class="y l">抗震暗柱/端柱纵筋露出长度</td><td>按规范计算</td></tr>
          </table>
          <div class="vs vs-s"><i></i></div>
        </div>
        <p class="dnote">提供两种选择。</p>
      </div>
    </div>
    <div class="dbtns"><button class="dbtn">导入规则</button><button class="dbtn">导出规则</button><button class="dbtn">恢复默认值</button></div>
  </div>
</section>

<section class="win win-sec">
  <header class="win-t"><span>截面编辑</span><i class="wb-x2">×</i></header>
  <div class="sec-tool">
    <span class="sbtn">选择</span><i class="ssep"></i>
    <span class="srad srad-on"><i></i>纵筋</span>
    <span class="srad srad-2"><i></i>箍筋</span><i class="ssep"></i>
    <span class="stl st-a">直线<i class="dd"></i></span><span class="stl">显示标注</span><span class="stl st-off">删除</span><span class="stl">清空钢筋</span><i class="ssep"></i><span class="stl st-e">布角筋</span><span class="more">▸▸</span>
  </div>
  <div class="sec-view">
    <div class="sec-info"><span>钢筋信息:</span><div class="sec-sel">1C14<i class="dd"></i></div></div>
    <svg class="sec-svg" viewBox="1503 951 424 334">
      <path class="gd" d="M1558 1028H1815M1558 1052H1815M1558 1073H1815M1558 1096H1815M1558 1118H1815M1558 1140H1815M1558 1162H1815M1558 1185H1815M1558 1207H1815M1558 1230H1815M1558 1253H1815M1591 1028V1285M1612 1028V1285M1635 1028V1285M1657 1028V1285M1679 1028V1285M1702 1028V1285M1724 1028V1285M1747 1028V1285M1769 1028V1285M1792 1028V1285M1814 1028V1285M1562 1028V1253"/>
      <g class="gl">
        <text x="1554" y="1044">100</text><text x="1554" y="1067">100</text><text x="1554" y="1089">100</text><text x="1554" y="1112">100</text><text x="1554" y="1134">100</text><text x="1554" y="1156">100</text><text x="1554" y="1179">100</text><text x="1554" y="1201">100</text><text x="1554" y="1223">100</text><text x="1554" y="1246">100</text>
        <text x="1592" y="1280">100</text><text x="1614" y="1280">100</text><text x="1636" y="1280">100</text><text x="1658" y="1280">100</text><text x="1680" y="1280">100</text><text x="1703" y="1280">100</text><text x="1725" y="1280">100</text><text x="1748" y="1280">100</text><text x="1770" y="1280">100</text><text x="1793" y="1280">100</text>
      </g>
      <path class="wl" d="M1606 1084H1797V1129H1651V1196H1606z"/>
      <path class="wd" d="M1614 1092H1789V1122H1614zM1614 1122V1188H1644V1122"/>
      <path class="rd" d="M1612 1090H1791V1124H1612zM1612 1124V1190H1646V1124M1678 1090V1124M1719 1090V1124M1755 1090V1124M1612 1157H1646"/>
      <path class="rd2" d="M1682 1091L1698 1107L1682 1123M1717 1091L1700 1107L1717 1123M1751 1091L1736 1107L1751 1123M1612 1122L1630 1107M1617 1124L1631 1110M1612 1188L1628 1173M1617 1190L1631 1176M1612 1155L1630 1138L1646 1155"/>
      <path class="grn" d="M1806 1084V1196M1799 1084H1813M1799 1129H1813M1799 1196H1813M1606 1205H1797M1606 1198V1212M1651 1198V1212M1797 1198V1212M1801 1080L1811 1088M1801 1125L1811 1133M1801 1192L1811 1200M1602 1210L1611 1200M1647 1210L1656 1200M1793 1210L1802 1200"/>
      <path class="lead" d="M1802 1075L1815 1052L1820 1042"/>
      <g class="dots"><circle cx="1614" cy="1092" r="1.500"/><circle cx="1643" cy="1092" r="1.500"/><circle cx="1789" cy="1092" r="1.500"/><circle cx="1789" cy="1121" r="1.500"/><circle cx="1614" cy="1121" r="1.500"/><circle cx="1643" cy="1121" r="1.500"/><circle cx="1614" cy="1188" r="1.500"/><circle cx="1643" cy="1188" r="1.500"/></g>
      <g class="dots dots-m"><circle cx="1680" cy="1092" r="1.500"/><circle cx="1716" cy="1092" r="1.500"/><circle cx="1753" cy="1092" r="1.500"/><circle cx="1680" cy="1121" r="1.500"/><circle cx="1716" cy="1121" r="1.500"/><circle cx="1753" cy="1121" r="1.500"/><circle cx="1614" cy="1155" r="1.500"/><circle cx="1643" cy="1155" r="1.500"/></g>
      <text class="dimt" x="1808" y="1112">200</text><text class="dimt" x="1808" y="1167">300</text><text class="dimt" x="1622" y="1219">200</text><text class="dimt" x="1717" y="1219">650</text>
      <text class="lgw" x="1821" y="1042">全部纵筋</text><text class="lgg" x="1861" y="1042">16C12</text>
      <text class="lgw" x="1821" y="1053">箍筋</text><text class="lgg" x="1861" y="1053">A8@200</text>
    </svg>
  </div>
  <footer class="sec-foot">
    <span class="fb"><svg class="ic"><path d="M2 2v12h13M2 9h5v5"/></svg></span><span class="fb"><svg class="ic"><path d="M1 15L15 1"/><path fill="#f57d20" stroke="none" d="M6 7h4v4H6z"/></svg></span><span class="fb"><svg class="ic"><path d="M8 1v13M1 14h14"/><path fill="#f57d20" stroke="none" d="M6 12h4v4H6z"/></svg></span><span class="fb"><svg class="ic"><path d="M1 4h8M5 1v7"/><path fill="#4d91df" stroke="none" d="M6 9h10v5H6z"/></svg></span>
    <span class="sec-st">(X: 464 Y: 784)选择钢筋进行编辑，选择标注进行修改或删除</span><span class="grip">⠠⠴⠶</span>
  </footer>
</section>

<svg class="annot" viewBox="0 0 1935 1359" aria-hidden="true">
  <ellipse cx="1337" cy="371" rx="41" ry="31" transform="rotate(-6 1337 371)"/>
  <ellipse cx="1164" cy="1093" rx="38" ry="140"/>
</svg>
</body>
</html>
```
FILE: styles.css
```css
*{box-sizing:border-box}
html{height:1359px;overflow:hidden}
html,body{margin:0;padding:0}
body{width:1935px;height:1359px;position:relative;overflow:hidden;background:#efefef;font:12px/1.2 "Noto Sans CJK SC","Noto Sans",sans-serif;color:#333}
i{font-style:normal}
.sprite{position:absolute;width:0;height:0;overflow:hidden}
.ic{width:16px;height:16px;flex:none;fill:none;stroke:#3d8ae0;stroke-width:1;display:block}
.ic30{width:29px;height:29px;display:block;fill:none;stroke:#3d8ae0}
.ic-g{stroke:#b5b5b5}
.dd{display:inline-block;width:0;height:0;border:3px solid transparent;border-top:4px solid #666;border-bottom:0;margin-left:6px;flex:none}
.dd-l{border-top-color:#bbb}
.app{width:1935px;height:1359px;display:flex;flex-direction:column}

/* title bar */
.top{height:43px;display:flex;background:#fff;border-top:3px solid #e6e6e6;flex:none}
.logo{width:33px;background:#ececee;flex:none}
.logo-svg{width:33px;height:40px;display:block}
.logo-t{font:bold 25px "Liberation Sans",sans-serif;fill:#fff;text-anchor:middle}
.top-main{flex:1;display:flex;flex-direction:column;min-width:0}
.qat{height:22px;display:flex;align-items:center;padding-left:6px;position:relative}
.q{width:23px;height:19px;display:flex;align-items:center;justify-content:center;flex:none}
.q .ic{width:15px;height:16px}
.q-w{width:31px;justify-content:flex-start;padding-left:3px}
.q-w .dd{margin-left:4px}
.q-on{background:#c8daf1}
.q-more{width:16px;display:flex;justify-content:center}
.q-more .dd{margin:0}
.title{margin-left:453px;font-size:12.500px;color:#222;white-space:nowrap;width:334px;overflow:hidden}
.blur{width:130px;height:26px;margin-top:2px;background:linear-gradient(90deg,#e8e8e8,#b8b8b8 25%,#e0e0e0 45%,#c8c8c8 60%,#f4f4f4);filter:blur(4px)}
.tabs{height:18px;display:flex;align-items:stretch;position:relative}
.tab{display:flex;align-items:center;font-size:12px;color:#333;flex:none}
.t1{margin-left:18px}
.t2{margin-left:26px}
.tab-on{margin-left:13px;width:50px;justify-content:center;background:#6cb1f2;color:#fff}
.t4{margin-left:13px}
.t5{margin-left:28px}
.t6{margin-left:26px}
.t7{margin-left:26px}
.search{width:243px;height:17px;margin-left:1226px;border:1px solid #ddd;display:flex;align-items:center;justify-content:space-between;padding:0 2px;color:#bbb;font-size:11px;flex:none}
.search .ic{width:13px;height:13px}
.usr{width:14px;height:17px;margin:-2px 0 0 6px;border-radius:50%;border:3px solid #c9c9c9;flex:none}
.bell{width:10px;height:14px;margin-left:8px;background:#c9c9c9;border-radius:5px 5px 0 0;flex:none}

/* ribbon */
.ribbon{height:98px;flex:none;display:flex;background:linear-gradient(#fff 55%,#f1f1f1);border-top:1px solid #d5d5d5;border-bottom:2px solid #a6a6a6}
.rg{display:flex;flex-direction:column;border-right:1px solid #d6d6d6;margin:2px 0;flex:none}
.rb{height:75px;display:flex;align-items:flex-start}
.rl{height:18px;display:flex;align-items:center;justify-content:center}
.rgrid{display:grid;grid-auto-flow:column;grid-template-rows:repeat(3,23.5px)}
.ri{display:flex;align-items:center;gap:2px;white-space:nowrap;color:#333}
.ri .dd{margin-left:5px}
.ri-off{color:#b4b4b4}
.g-sel{width:133px}
.bigsel{width:36px;height:67px;margin:3px 6px 0 0;background:#c8daf1;display:flex;flex-direction:column;align-items:center;justify-content:space-between;padding-bottom:13px;flex:none}
.bigsel-i{width:28px;height:27px;margin-top:3px;border:1px solid #3d8ae0;border-top:2px solid #3d8ae0;background:#fff;position:relative;margin-left:-5px}
.bigsel-d{position:absolute;left:6px;top:5px;width:20px;height:18px;border:1px dashed #f0a030;border-right:0;border-bottom:0}
.bigsel-a{position:absolute;right:-1px;bottom:-1px;width:10px;height:16px;background:#2e6fc0;clip-path:polygon(0 0,100% 60%,60% 60%,100% 100%,0 100%)}
.bigsel span{font-size:13px}
.g-cad{width:194px}
.g-cad .rb{padding-left:10px}
.g-cad .rgrid{grid-template-columns:79px auto}
.g-gen{width:276px}
.g-gen .rb{padding-left:10px}
.g-gen .rgrid{grid-template-columns:67px 111px auto}
.g-mod{width:238px}
.g-mod .rb{padding-left:10px}
.g-mod .rgrid{grid-template-columns:54px 54px 55px auto}
.g-draw{width:119px}
.bb{display:flex;flex-direction:column;align-items:center;white-space:nowrap;flex:none;gap:9px;padding-top:3px}
.bb-pt{margin-left:11px;width:29px}
.bb-ln{margin-left:14px;width:29px}
.ic-arc{width:15px;height:30px;margin:3px 0 0 11px;fill:none;stroke:#3d8ae0;flex:none}
.g-rec{width:368px}
.bb-a{width:48px;margin-left:7px}
.bb-b{width:60px;margin-left:8px}
.bb-c{width:33px;margin-left:11px}
.g-rec .rgrid{margin-left:11px;grid-template-columns:98px auto;grid-template-rows:repeat(2,23.5px)}
.g-smart{width:232px}
.bb-s{width:48px;margin-left:8px}
.g-smart .rgrid{margin-left:7px;grid-template-columns:90px auto;grid-template-rows:repeat(2,23.5px)}

/* combos */
.combos{height:28px;flex:none;background:#d0d2d6;display:flex;gap:3px;padding-top:3px}
.cb{height:22px;background:#fff;display:flex;align-items:center;justify-content:space-between;padding:0 3px;font-size:13px;overflow:hidden;flex:none}
.cb-a{width:88px}
.cb-b{width:97px}
.cb-cut{margin-left:-6px}

/* work */
.work{flex:1;display:flex;min-height:0}
.nav{width:157px;flex:none;display:flex;flex-direction:column;background:#fff;border-right:1px solid #c8c8c8;margin-right:6px}
.pbar{height:11px;background:#d3d4d9;display:flex;justify-content:flex-end;align-items:center;padding-right:4px;flex:none;border-bottom:1px solid #c2c2c2}
.px{font-size:11px;line-height:11px;color:#777;font-weight:bold}
.nav-head{height:22px;background:#efefef;display:flex;align-items:center;color:#999;border-bottom:1px solid #ccc;overflow:hidden;flex:none;padding-top:2px}
.nav-cut{margin-left:-3px}
.nav-tool{height:29px;display:flex;align-items:center;gap:4px;background:#fff;border-bottom:1px solid #ccc;flex:none;padding-right:1px;justify-content:flex-end;position:relative}
.pin{width:10px;height:10px;fill:none;stroke:#3d8ae0;stroke-width:2;margin-right:auto}
.vbtn{width:24px;height:24px;border:1px solid #7db9f7;border-radius:3px;display:flex;align-items:center;justify-content:center;background:#f3f8fe}
.nav-body{flex:1;display:flex;min-height:0;overflow:hidden}
.tree{width:146px;flex:none;padding-top:4px;overflow:hidden}
.nr{height:21px;margin-bottom:3px;display:flex;align-items:center;white-space:nowrap;color:#333}
.nr.g{padding-left:0}
.fold{width:15px;height:15px;margin-left:-8px;margin-right:5px;flex:none}
.nr.i{margin-left:29px;padding-left:3px;width:110px;gap:6px}
.nr.on{background:#c8daf1}
.vs{flex:none;position:relative}
.vs i{display:block;background:#cbcbcb;border-radius:4px}
.vs-nav{width:11px;padding-top:17px}
.vs-nav i{width:8px;height:740px}

/* middle column */
.mid{width:274px;flex:none;display:flex;flex-direction:column;margin-right:5px}
.clist{height:488px;display:flex;flex-direction:column;border:1px solid #c8c8c8;border-top:0;background:#fff;flex:none}
.ptabs{height:23px;background:#efefef;display:flex;border-bottom:1px solid #c8c8c8;flex:none}
.ptab{width:65px;display:flex;align-items:center;justify-content:center;background:#e0e0e0;color:#999;margin-top:1px;border-right:1px solid #ccc;font-size:12px;padding-top:1px}
.ptab-on{background:#efefef;color:#333;font-weight:500}
.ctool{height:28px;display:flex;align-items:center;background:#f1f1f1;border-bottom:1px solid #ccc;padding:1px 0 0 6px;flex:none}
.ct{display:flex;align-items:center;gap:2px;white-space:nowrap}
.ct .dd{margin-left:5px}
.ct-a{width:64px}
.ct-b{width:50px}
.ct-c{width:52px}
.more{margin-left:auto;margin-right:3px;font-size:7px;letter-spacing:-1px;color:#555}
.csearch{height:20px;display:flex;align-items:center;justify-content:space-between;color:#aaa;border-bottom:1px solid #ccc;padding:1px 5px 0 2px;flex:none}
.cbody{flex:1;display:flex;min-height:0;overflow:hidden}
.ctree{flex:1;padding-top:4px;overflow:hidden}
.cr{height:21px;margin-bottom:3px;display:flex;align-items:center;white-space:nowrap}
.tw{width:0;height:0;border:3px solid transparent;border-bottom:5px solid #555;border-right:5px solid #555;margin-right:4px;flex:none}
.cr0{padding-left:9px}
.cr1{padding-left:29px}
.cr2{padding-left:59px}
.cr2 span{display:block;width:46px;height:21px;line-height:21px;padding-left:3px;letter-spacing:.2px}
.cr2.on span{background:#c8daf1}
.vs-c{width:9px;padding-top:16px}
.vs-c i{width:7px;height:240px}
.props{flex:1;display:flex;flex-direction:column;margin-top:6px;min-height:0}
.pbody{height:640px;border:1px solid #c8c8c8;border-top:0;background:#fff;overflow:hidden;flex:none;position:relative}
.pbody::before{content:"";position:absolute;left:0;top:0;bottom:0;width:22px;background:#efefef}
.ptable{border-collapse:collapse;table-layout:fixed;width:272px;position:relative}
.pc1{width:22px}.pc2{width:100px}.pc3{width:150px}
.ptable td,.ptable th{height:21px;padding:0 3px;border:1px solid #d4d4d4;border-width:0 1px 1px 0;font-weight:normal;white-space:nowrap;overflow:hidden;background:#fff}
.ptable .ph th{height:20px;background:#efefef;color:#333}
.stable .sh-r th{height:19px;background:#efefef;color:#333}
.ptable .ph th.hl,.stable .sh-r th.hl,.rtable th.hl{background:#7db9f7;color:#fff;border:1px solid #69a9ec}
.ptable td.n,.stable td.n{background:#efefef;text-align:center;color:#555;padding:0;font-size:12px}
.ptable td.n{font-size:13px}
.ptable .lk{color:#3578e5}
.ptable td.dis{background:#e9e9e9;color:#aaa}
.stable td.nsel,.ptable td.nsel{background:#7db9f7;color:#fff;font-weight:bold}
.ptable td.csel,.stable td.csel{box-shadow:inset 0 0 0 2px #808080}
.pm{display:inline-flex;width:12px;height:12px;align-items:center;justify-content:center;border:1px solid #777;border-radius:2px;font-size:11px;line-height:1;color:#333;margin:0 7px 0 0;vertical-align:-1px}
.stabs{height:22px;padding:3px 0 0 5px;background:#efefef;flex:none}
.stab{display:inline-flex;width:79px;height:19px;align-items:center;justify-content:center;background:#fff;border:1px solid #ccc;border-bottom:0;border-radius:3px 3px 0 0;color:#333}

/* centre */
.center{width:1336px;flex:none;display:flex;flex-direction:column;margin-right:2px}
.canvas{width:1336px;height:714px;display:block;flex:none}
.cg{stroke:#0a7a0a;fill:none}
.cr1l{stroke:#c80000;fill:none}
.cr1d{stroke:#7a0000}
.ct1{font:18px "Liberation Sans",sans-serif;fill:#f2f2f2}
.axis{font:bold 15px "Liberation Sans",sans-serif}
.ax-g{fill:#14e014}
.ax-r{fill:#f00}
.gapbar{height:15px;background:#d4d5da;border-top:7px solid #efefef;flex:none}
.rebar{flex:1;display:flex;flex-direction:column;min-height:0;background:#efefef;border-bottom:1px solid #ccc}
.rebar-t{height:22px;display:flex;align-items:center;padding-left:9px;color:#999;font-size:13px;border-bottom:1px solid #ccc;flex:none}
.rebar-box{margin:9px 10px 0 9px;flex:1;background:#fff;border:1px solid #ccc;border-bottom:2px solid #ccc;overflow:hidden;position:relative}
.rebar-box::before{content:"";position:absolute;left:0;top:27px;bottom:0;width:7px;background:#efefef}
.rtool{height:27px;display:flex;align-items:center;background:#efefef;white-space:nowrap}
.nv{font:11px "Liberation Mono",monospace;color:#888;flex:none}
.nv1{margin-left:6px;width:20px}.nv2{width:17px}.nv3{width:18px;color:#333}.nv4{width:20px;color:#333}
.rt-up{margin-right:8px}
.rt-dn{margin-right:8px}
.rt{display:flex;align-items:center;gap:3px}
.rt1{width:50px}.rt2{width:54px}.rt3{width:75px}.rt4{width:75px}.rt5{width:77px}.rt6{width:61px}
.rt6 .dd{margin-left:5px}
.rt-tot{color:#444}
.rtable{border-collapse:collapse;table-layout:fixed;width:1326px;position:relative}
.c0{width:7px}.c1{width:72px}.c2{width:56px}.c3{width:36px}.c4{width:33px}.c5{width:216px}.c6{width:166px}.c7{width:61px}.c8{width:38px}.c9{width:39px}.c10{width:49px}.c11{width:61px}.c12{width:61px}.c13{width:71px}.c14{width:74px}.c15{width:286px}
.rtable td,.rtable th{border:1px solid #d2d2d2;padding:0 3px;font-weight:normal;overflow:hidden;white-space:nowrap;font-size:12px;color:#222}
.rtable th{height:21px;background:#efefef;color:#333;font-size:12px;padding:0}
.rr td{height:46px;background:#ccfdd6}
.rempty td{height:21px;background:#fff}
.rtable td.rn{padding:0;background:#efefef;text-align:center;font-size:12px}
.rtable td.rn-sel{background:#7db9f7;color:#fff}
.rtable td.rsel{box-shadow:inset 0 0 0 1.500px #808080}
.rtable td.m{font:12px/14px "Liberation Mono","Noto Sans CJK SC",monospace;letter-spacing:-1.200px;padding-left:3px}
.rtable td.f{padding-right:0}
.rtable td.gr{font-size:11px;padding-left:5px}
.rtable td.ds{line-height:13px;padding:0 1px;font-size:12px}
.rtable td.shape{padding:0}
.sh{display:block;width:216px;height:45px}
.s-r{font:12px "Liberation Mono",monospace;fill:#f00;letter-spacing:-.5px}
.s-l{stroke:#000;stroke-width:2;fill:none}
.s-b{font:19px "Liberation Serif",serif;fill:#1a3a3a}
.s-br{font:19px "Liberation Serif",serif;fill:#f00}
.s-m{font:13px "Liberation Mono",monospace;fill:#222}

/* right strip */
.rp{width:155px;flex:none;display:flex;flex-direction:column;background:#fff;border-left:1px solid #c8c8c8}
.rp-t{height:39px;background:linear-gradient(#fff 27px,#d4d5da 27px)}
.rp-tab{height:22px;background:#efefef;color:#555;display:flex;align-items:center;justify-content:flex-end;border-bottom:1px solid #ccc;padding-right:6px}
.rp-h{height:21px;margin-top:4px;margin-left:135px;background:#7db9f7;color:#fff;overflow:hidden;padding:2px 0 0 5px}
.rp-rows{height:1073px;margin-left:5px;border:1px solid #c8c8c8;border-top:0;background:repeating-linear-gradient(#fff 0 20px,#d4d4d4 20px 21px);position:relative;flex:none;overflow:hidden}
.rp-txt{position:absolute;left:40px;top:1056px;white-space:nowrap;background:#fff;line-height:12px}

/* windows */
.win{position:absolute;background:#efefef}
.win-t{background:#2e7fe0;color:#fff;font-size:13px;display:flex;align-items:center;justify-content:space-between;padding-left:9px}
.win-calc{left:811px;top:91px;width:1105px;height:782px;display:flex;flex-direction:column;border-left:1px solid #c8c8c8}
.win-calc .win-t{height:27px;flex:none}
.wb{display:flex;align-items:center;gap:17px;padding-right:11px}
.wb-min{width:9px;height:2px;background:#fff;margin-top:8px}
.wb-max{width:8px;height:8px;border:1px solid #fff;border-top-width:2px}
.wb-x{font:16px/10px "Liberation Sans",sans-serif;color:#fff}
.win-b{flex:1;padding:15px 12px 0 11px;display:flex;flex-direction:column;min-height:0}
.dtabs{height:25px;display:flex;gap:3px;flex:none;position:relative;z-index:1}
.dtab{width:60px;height:20px;margin-top:4px;display:flex;align-items:center;justify-content:center;background:#ddd;color:#666;border-radius:2px 2px 0 0}
.dtab-on{height:25px;margin-top:0;background:#fff;color:#3d8ae0;border:1px solid #ccc;border-bottom:0;margin-right:1px}
.dpanel{width:1081px;height:671px;display:flex;gap:6px;padding:9px 9px 0 8px;background:#fff;border:1px solid #c8c8c8;flex:none;margin-top:-1px}
.dlist{width:120px;height:651px;margin:0;padding:1px 2px;list-style:none;border:1px solid #a8a8a8;flex:none}
.dlist li{height:30px;display:flex;align-items:center;padding-left:1px;white-space:nowrap;color:#333}
.dlist li.on{height:28px;margin-bottom:1px;background:#b0cbec}
.dright{flex:1;min-width:0}
.dwrap{height:628px;display:flex;border:1px solid #c8c8c8;overflow:hidden}
.stable{border-collapse:collapse;table-layout:fixed;width:921px;flex:none;align-self:flex-start}
.sc1{width:22px}.sc2{width:351px}.sc3{width:548px}
.stable td,.stable th{height:21px;padding:0 3px;border:1px solid #d4d4d4;border-width:0 1px 1px 0;font-weight:normal;white-space:nowrap;overflow:hidden;color:#222}
.stable td.y{background:#ffc;position:relative}
.stable td.g0{color:#999;padding-left:4px}
.stable td.l{padding-left:32px}
.stable td.l::before{content:"";position:absolute;left:9px;top:0;bottom:0;border-left:1px dotted #ccc}
.stable td.l::after{content:"";position:absolute;left:10px;top:10px;width:14px;border-top:1px solid #ddd}
.vs-s{width:14px;padding:13px 3px 0 4px}
.vs-s i{width:7px;height:492px}
.dnote{margin:8px 0 0;line-height:14px;color:#333}
.dbtns{display:flex;gap:6px;margin-top:7px;flex:none}
.dbtn{width:80px;height:25px;padding:0;background:#fff;border:1px solid #ccc;border-radius:3px;font:12px "Noto Sans CJK SC",sans-serif;color:#333}

.win-sec{left:1501px;top:889px;width:428px;height:428px;display:flex;flex-direction:column;border:2px solid #c8c9ce;border-top:0}
.win-sec .win-t{height:27px;margin:0 -2px;flex:none;padding-left:9px}
.wb-x2{font:22px/16px "Liberation Sans",sans-serif;padding-right:6px}
.sec-tool{height:34px;background:#fff;display:flex;align-items:center;padding:0 0 0 3px;white-space:nowrap;flex:none;color:#555;border-bottom:1px solid #ddd}
.sbtn{width:35px;height:22px;border:1px solid #7db9f7;border-radius:3px;background:#f3f8fe;color:#3d8ae0;display:flex;align-items:center;justify-content:center}
.ssep{width:1px;height:24px;background:#ddd;margin:0 1px;flex:none}
.srad{display:flex;align-items:center;gap:5px;margin-left:3px;color:#333}
.srad i{width:14px;height:14px;border:1px solid #888;border-radius:50%;display:block;flex:none}
.srad-on i{border:1px solid #888;background:radial-gradient(#3d8ae0 0 3px,#fff 3.500px)}
.srad-2{margin-left:15px}
.stl{display:flex;align-items:center;justify-content:center;padding:0 3px;height:22px;color:#555;margin-right:2px}
.st-a{width:49px;justify-content:space-between;margin-left:1px}
.st-off{color:#bbb;width:34px}
.st-e{margin-left:4px;width:46px}
.sec-tool .more{margin-right:4px}
.sec-view{flex:1;background:#000;position:relative;min-height:0}
.sec-svg{display:block;width:424px;height:334px}
.sec-info{position:absolute;left:3px;top:3px;width:207px;height:38px;background:#e1e7ea;display:flex;align-items:center;padding-left:9px;gap:6px;color:#444;font-size:13px}
.sec-sel{width:135px;height:26px;background:#fff;border:1px solid #bbb;display:flex;align-items:center;justify-content:space-between;padding:0 6px;color:#444}
.gd{stroke:#4d5566;fill:none;stroke-dasharray:6 3}
.gl text{font:12px "Liberation Sans",sans-serif;fill:#5c6678}
.wl{fill:none;stroke:#eee;stroke-width:3}
.rd{fill:none;stroke:#c9141e;stroke-width:2}
.rd2{fill:none;stroke:#c9141e;stroke-width:1.700}
.wd{fill:none;stroke:#e8e8ff;stroke-dasharray:3 2}
.grn{stroke:#1de01d;fill:none}
.lead{stroke:#777;fill:none;stroke-dasharray:2 2}
.dots circle{fill:none;stroke:#f0d020}
.dots-m circle{stroke:#e020e0}
.dimt{font:8px "Liberation Sans",sans-serif;fill:#fff}
.lgw{font:8px "Noto Sans CJK SC",sans-serif;fill:#eee}
.lgg{font:8px "Liberation Sans",sans-serif;fill:#1dd01d}
.sec-foot{height:30px;background:#dedfe3;display:flex;align-items:center;flex:none;padding-left:2px;gap:0;overflow:hidden}
.fb{width:25px;height:25px;background:#fff;border:1px solid #2e8fe8;display:flex;align-items:center;justify-content:center;flex:none}
.sec-st{width:301px;overflow:hidden;white-space:nowrap;color:#444;font-size:12px;margin-left:1px;flex:none}
.grip{font-size:8px;color:#888;margin-left:6px;align-self:flex-end}
.annot{position:absolute;left:0;top:0;width:1935px;height:1359px;pointer-events:none}
.annot ellipse{fill:none;stroke:#e81c10;stroke-width:2.500}
```
